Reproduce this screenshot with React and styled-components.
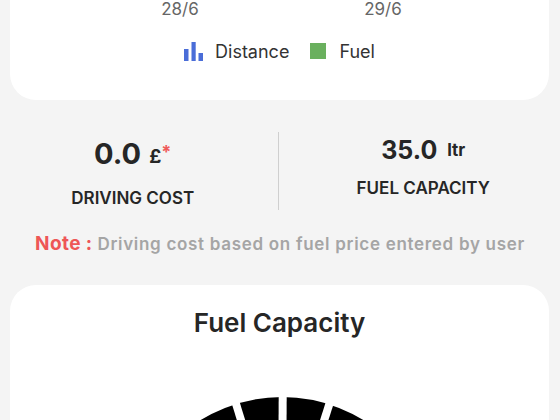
import React from 'react'
import styled, { createGlobalStyle } from 'styled-components'

const GlobalStyle = createGlobalStyle`
  body {
    margin: 0;
    background: #f4f4f4;
    font-family: Inter, "Open Sans", sans-serif;
    color: #262626;
  }
`

const Page = styled.div`
  display: flex;
  flex-direction: column;
  height: 420px;
  overflow: hidden;

  & > * {
    flex-shrink: 0;
  }
`

const ChartCard = styled.section`
  margin: 0 11px 0 10px;
  height: 100px;
  background: #fff;
  border-radius: 0 0 26px 26px;
  display: flex;
  flex-direction: column;
`

const AxisRow = styled.div`
  display: flex;
  gap: 123px;
  padding-left: 130px;
  height: 17px;
`

const AxisLabel = styled.span`
  width: 80px;
  text-align: center;
  font-size: 17px;
  line-height: 18px;
  color: #666;
`

const Legend = styled.div`
  margin-top: 22px;
  display: flex;
  align-items: center;
  justify-content: center;
  height: 24px;
`

const LegendItem = styled.div`
  display: flex;
  align-items: center;
  gap: ${p => p.$gap}px;
  margin-right: ${p => p.$after || 0}px;
  font-size: 18px;
  color: #333;
`

const Swatch = styled.span`
  width: 16px;
  height: 16px;
  background: #6ab05e;
`

const StatsRow = styled.div`
  margin-top: 32px;
  height: 75px;
  display: grid;
  grid-template-columns: 1fr 1px 1fr;
  column-gap: 22px;
  padding: 0 14px 0 10px;
`

const Stat = styled.div`
  padding-top: 2px;
  display: flex;
  flex-direction: column;
  align-items: center;
`

const Value = styled.div`
  font-size: ${p => p.$size}px;
  line-height: ${p => p.$line}px;
  font-weight: 700;
  white-space: nowrap;
`

const Unit = styled.span`
  font-size: ${p => p.$size}px;
  font-weight: 700;
  margin-left: ${p => p.$gap}px;
  vertical-align: ${p => p.$raise}px;
`

const Star = styled.span`
  font-size: 18px;
  color: #ef5a5a;
  font-weight: 700;
  vertical-align: 6px;
`

const StatLabel = styled.div`
  margin-top: ${p => p.$gap}px;
  font-size: 17px;
  line-height: 24px;
  font-weight: 600;
  text-transform: uppercase;
`

const Divider = styled.div`
  background: #cfcfcf;
`

const Note = styled.p`
  margin: 23px 0 0;
  text-align: center;
  font-size: 17px;
  line-height: 28px;
  font-weight: 600;
  letter-spacing: 0.7px;
  color: #a5a5a5;
  white-space: nowrap;
`

const NoteTag = styled.span`
  font-size: 19px;
  font-weight: 700;
  letter-spacing: 0.4px;
  color: #ee5656;
`

const GaugeCard = styled.section`
  margin: 27px 11px 0 10px;
  height: 200px;
  background: #fff;
  border-radius: 26px 26px 0 0;
  padding-top: 21px;
  display: flex;
  flex-direction: column;
  align-items: center;
`

const Title = styled.h2`
  margin: 0;
  font-size: 26px;
  line-height: 34px;
  font-weight: 600;
`

const GaugeWrap = styled.div`
  margin-top: 57px;
  margin-left: 5px;
`

function BarsIcon() {
  return (
    <svg width="19" height="19" viewBox="0 0 19 19">
      <rect x="0" y="7" width="4.5" height="12" fill="#4a6dd8" />
      <rect x="7.5" y="0" width="4.2" height="19" fill="#4a6dd8" />
      <rect x="14.5" y="11" width="4.5" height="8" fill="#4a6dd8" />
    </svg>
  )
}

function Gauge() {
  const r = 155
  const cx = 160
  const cy = 155
  const ring = 40
  const mid = r - ring / 2
  const gaps = []
  for (let a = -87.25; a <= 90; a += 17.5) gaps.push(a)
  return (
    <svg width="320" height="160" viewBox="0 0 320 160">
      <path
        d={`M ${cx - mid} ${cy} A ${mid} ${mid} 0 0 1 ${cx + mid} ${cy}`}
        fill="none"
        stroke="#000"
        strokeWidth={ring}
      />
      {gaps.map(a => {
        const t = (a * Math.PI) / 180
        return (
          <line
            key={a}
            x1={cx + (r - ring - 4) * Math.sin(t)}
            y1={cy - (r - ring - 4) * Math.cos(t)}
            x2={cx + (r + 4) * Math.sin(t)}
            y2={cy - (r + 4) * Math.cos(t)}
            stroke="#fff"
            strokeWidth="8"
          />
        )
      })}
    </svg>
  )
}

export default function App() {
  return (
    <Page>
      <GlobalStyle />
      <ChartCard>
        <AxisRow>
          <AxisLabel>28/6</AxisLabel>
          <AxisLabel>29/6</AxisLabel>
        </AxisRow>
        <Legend>
          <LegendItem $gap={12} $after={21}>
            <BarsIcon />
            Distance
          </LegendItem>
          <LegendItem $gap={13}>
            <Swatch />
            Fuel
          </LegendItem>
        </Legend>
      </ChartCard>

      <StatsRow>
        <Stat>
          <Value $size={29} $line={36}>
            0.0<Unit $size={19} $gap={8} $raise={1}>£</Unit><Star>*</Star>
          </Value>
          <StatLabel $gap={11}>Driving Cost</StatLabel>
        </Stat>
        <Divider />
        <Stat>
          <Value $size={25} $line={32}>
            35.0<Unit $size={17} $gap={10} $raise={3}>ltr</Unit>
          </Value>
          <StatLabel $gap={10}>Fuel Capacity</StatLabel>
        </Stat>
      </StatsRow>

      <Note>
        <NoteTag>Note : </NoteTag>Driving cost based on fuel price entered by user
      </Note>

      <GaugeCard>
        <Title>Fuel Capacity</Title>
        <GaugeWrap>
          <Gauge />
        </GaugeWrap>
      </GaugeCard>
    </Page>
  )
}
